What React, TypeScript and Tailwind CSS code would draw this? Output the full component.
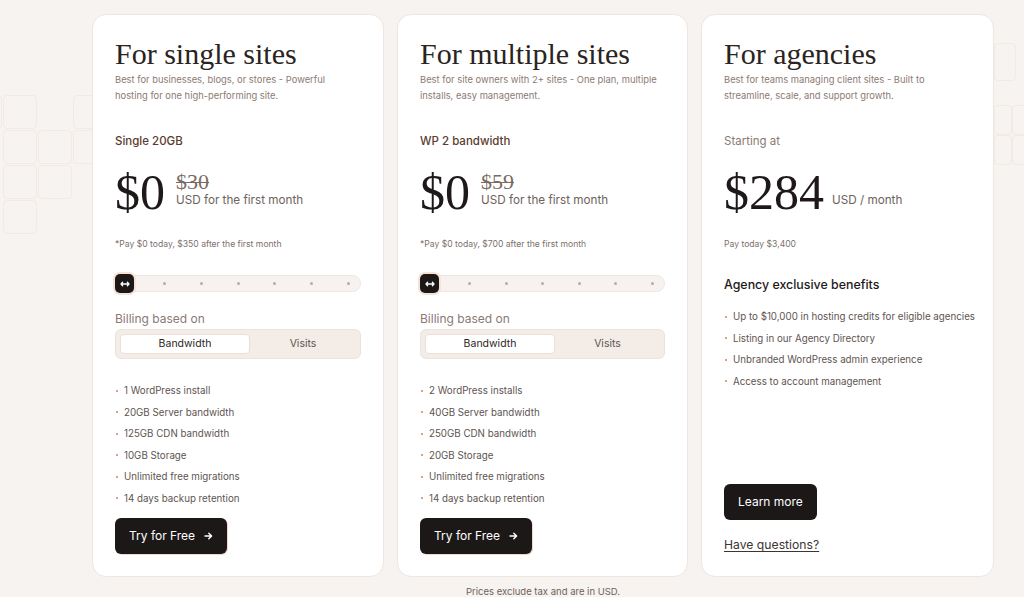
import React from "react";

const sans = "font-['Inter','Liberation_Sans',sans-serif]";
const serif = "font-['Liberation_Serif',serif]";

interface Plan {
  title: string;
  desc: string[];
  label: string;
  price: string;
  oldPrice: string;
  pay: string;
  features: string[];
  width: string;
}

const plans: Plan[] = [
  {
    title: "For single sites",
    desc: ["Best for businesses, blogs, or stores - Powerful", "hosting for one high-performing site."],
    label: "Single 20GB",
    price: "$0",
    oldPrice: "$30",
    pay: "*Pay $0 today, $350 after the first month",
    features: [
      "1 WordPress install",
      "20GB Server bandwidth",
      "125GB CDN bandwidth",
      "10GB Storage",
      "Unlimited free migrations",
      "14 days backup retention",
    ],
    width: "w-[292px]",
  },
  {
    title: "For multiple sites",
    desc: ["Best for site owners with 2+ sites - One plan, multiple", "installs, easy management."],
    label: "WP 2 bandwidth",
    price: "$0",
    oldPrice: "$59",
    pay: "*Pay $0 today, $700 after the first month",
    features: [
      "2 WordPress installs",
      "40GB Server bandwidth",
      "250GB CDN bandwidth",
      "20GB Storage",
      "Unlimited free migrations",
      "14 days backup retention",
    ],
    width: "w-[291px]",
  },
];

const agencyPerks = [
  "Up to $10,000 in hosting credits for eligible agencies",
  "Listing in our Agency Directory",
  "Unbranded WordPress admin experience",
  "Access to account management",
];

function Bullet({ text }: { text: string }) {
  return (
    <li className="flex items-center gap-[6px] whitespace-nowrap text-[9.75px] leading-[21.5px] text-[#5d5450]">
      <span className="shrink-0 w-[2px] h-[2px] rounded-full bg-[#c0876a] ml-[1px]" />
      {text}
    </li>
  );
}

function Slider() {
  return (
    <div className="relative mt-[25px] h-[17px] rounded-full bg-[#f7f2ef] border border-[#f0e6e0] flex items-center justify-between pl-[47px] pr-[10px]">
      <div className="absolute left-[-1px] top-[-2px] w-[19px] h-[19px] rounded-[5px] bg-[#1d1818] ring-2 ring-[#f6e3d8] flex items-center justify-center">
        <svg width="10" height="6" viewBox="0 0 10 6" fill="none" stroke="white" strokeWidth="1.3" strokeLinecap="round">
          <path d="M1 3h8M2.6 1.2L1 3l1.6 1.8M7.4 1.2L9 3 7.4 4.8" />
        </svg>
      </div>
      {[0, 1, 2, 3, 4, 5].map((i) => (
        <span key={i} className="w-[3px] h-[3px] rounded-full bg-[#b9aca6]" />
      ))}
    </div>
  );
}

function PlanCard({ plan }: { plan: Plan }) {
  return (
    <div className={`${plan.width} h-[563px] shrink-0 bg-white rounded-[14px] border border-[#efe6df] px-[22px] pt-[22px] flex flex-col`}>
      <h2 className={`${serif} text-[30px] leading-[34px] text-[#2a2321]`}>{plan.title}</h2>
      <p className="mt-[1px] whitespace-nowrap text-[9.4px] leading-[16px] text-[#8b7a73]">
        {plan.desc[0]}
        <br />
        {plan.desc[1]}
      </p>
      <p className="mt-[29px] text-[11.5px] leading-[16px] font-medium text-[#5c3b2e]">{plan.label}</p>
      <div className="mt-[19px] flex items-start gap-[11px]">
        <span className={`${serif} text-[50px] leading-[48px] text-[#1e1918]`}>{plan.price}</span>
        <div className="mt-[4px] flex flex-col">
          <span className={`${serif} text-[22px] leading-[20px] text-[#7a6a63] line-through decoration-1`}>
            {plan.oldPrice}
          </span>
          <span className="text-[11.7px] leading-[16px] text-[#6e625d]">USD for the first month</span>
        </div>
      </div>
      <p className="mt-[22px] whitespace-nowrap text-[8.6px] leading-[12px] text-[#7c706b]">{plan.pay}</p>
      <Slider />
      <p className="mt-[19px] text-[12px] leading-[16px] text-[#8b7a73]">Billing based on</p>
      <div className="mt-[2px] h-[30px] rounded-[6px] bg-[#f4ece7] border border-[#eee3dc] p-[4px] flex">
        <div className="w-[130px] h-full rounded-[4px] bg-white border border-[#ebe0d9] flex items-center justify-center text-[10.5px] text-[#2d2523]">
          Bandwidth
        </div>
        <div className="flex-1 flex items-center justify-center text-[10.5px] text-[#5d5450]">Visits</div>
      </div>
      <ul className="mt-[21px]">
        {plan.features.map((f) => (
          <Bullet key={f} text={f} />
        ))}
      </ul>
      <button className="mt-[9px] self-start h-[36px] px-[14px] rounded-[6px] bg-[#1d1818] text-white text-[12px] flex items-center gap-[9px] shadow-[1px_1px_0_#f1d8ca]">
        Try for Free
        <svg width="9" height="8" viewBox="0 0 9 8" fill="none" stroke="white" strokeWidth="1.4" strokeLinecap="round" strokeLinejoin="round">
          <path d="M1 4h6.5M4.8 1.2L7.6 4 4.8 6.8" />
        </svg>
      </button>
    </div>
  );
}

function AgencyCard() {
  return (
    <div className="w-[293px] h-[563px] shrink-0 bg-white rounded-[14px] border border-[#efe6df] px-[22px] pt-[22px] flex flex-col">
      <h2 className={`${serif} text-[30px] leading-[34px] text-[#2a2321]`}>For agencies</h2>
      <p className="mt-[1px] whitespace-nowrap text-[9.4px] leading-[16px] text-[#8b7a73]">
        Best for teams managing client sites - Built to
        <br />
        streamline, scale, and support growth.
      </p>
      <p className="mt-[29px] text-[11.5px] leading-[16px] text-[#8b7a73]">Starting at</p>
      <div className="mt-[19px] flex items-start gap-[8px]">
        <span className={`${serif} text-[50px] leading-[48px] text-[#1e1918]`}>$284</span>
        <span className="mt-[24px] text-[11.7px] leading-[16px] text-[#6e625d]">USD / month</span>
      </div>
      <p className="mt-[22px] text-[8.6px] leading-[12px] text-[#7c706b]">Pay today $3,400</p>
      <p className="mt-[26px] text-[12.4px] leading-[18px] font-medium text-[#1e1918]">Agency exclusive benefits</p>
      <ul className="mt-[12px]">
        {agencyPerks.map((p) => (
          <Bullet key={p} text={p} />
        ))}
      </ul>
      <button className="mt-[92px] self-start h-[36px] px-[14px] rounded-[6px] bg-[#1d1818] text-white text-[12px] flex items-center">
        Learn more
      </button>
      <a className="mt-[17px] self-start text-[12.2px] leading-[16px] text-[#3d3533] underline underline-offset-2">
        Have questions?
      </a>
    </div>
  );
}

const tiles: [number, number, number, number][] = [
  [3, 95, 34, 34],
  [73, 95, 34, 34],
  [3, 130, 34, 34],
  [38, 130, 34, 34],
  [73, 130, 34, 34],
  [3, 165, 34, 34],
  [38, 165, 34, 34],
  [3, 200, 34, 34],
  [-30, 95, 32, 34],
  [994, 43, 22, 38],
  [994, 105, 18, 30],
  [1012, 105, 30, 30],
  [994, 135, 18, 30],
  [1012, 135, 30, 30],
];

export default function App() {
  return (
    <div className={`${sans} relative w-full h-[597px] overflow-hidden bg-[#f7f3f0]`}>
      {tiles.map(([x, y, w, h], i) => (
        <div
          key={i}
          className="absolute rounded-[4px] border border-[#f1eae6]"
          style={{ left: x, top: y, width: w, height: h }}
        />
      ))}
      <div className="relative flex gap-[13px] pl-[92px] pt-[14px]">
        {plans.map((p) => (
          <PlanCard key={p.title} plan={p} />
        ))}
        <AgencyCard />
      </div>
      <p className="relative ml-[92px] w-[902px] mt-[8px] text-center text-[9.5px] leading-[14px] text-[#6e625d]">
        Prices exclude tax and are in USD.
      </p>
    </div>
  );
}
